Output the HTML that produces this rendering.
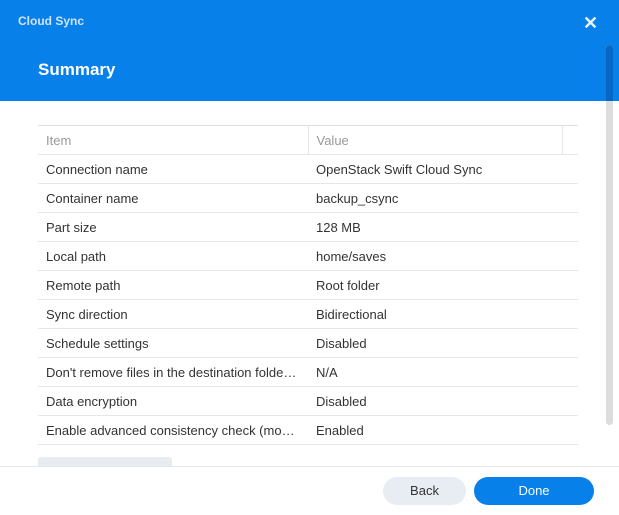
<!DOCTYPE html>
<html><head><style>
body{margin:0;width:619px;height:514px;overflow:hidden;background:#fff;font-family:"Liberation Sans",sans-serif;position:relative}
.hdr{position:absolute;left:0;top:0;width:619px;height:101px;background:#0780ea}
.t1{position:absolute;left:18px;top:14px;font-size:12px;font-weight:bold;color:#cfe4fa}
.t2{position:absolute;left:38px;top:60px;font-size:17px;font-weight:bold;color:#fff}
.x{position:absolute;left:583px;top:13px;font-size:18px;font-weight:bold;color:#e6f1fc}
.sb{position:absolute;left:606px;top:45px;width:7px;height:380px;border-radius:4px;background:#ddd}
.sb2{position:absolute;left:606px;top:45px;width:7px;height:56px;border-radius:4px 4px 0 0;background:#0668c4}
table{position:absolute;left:38px;top:125px;width:540px;border-collapse:collapse;font-size:13px;color:#333;table-layout:fixed}
td{height:28px;border-top:1px solid #e3e7ec;border-bottom:1px solid #e3e7ec;padding:0 0 0 8px;white-space:nowrap;overflow:hidden;text-overflow:ellipsis}
td.a{padding-right:10px}
th{height:26px;border-top:1px solid #d9dee4;border-bottom:1px solid #e3e7ec;font-weight:normal;text-align:left;color:#999;padding-left:8px}
.gb{position:absolute;left:38px;top:457px;width:134px;height:12px;background:#e8ecf1;border-radius:3px}
.ft{position:absolute;left:0;top:466px;width:619px;height:48px;background:#fff;border-top:1px solid #e3e7ec}
.btn{position:absolute;top:477px;height:28px;border-radius:14px;font-size:13px;text-align:center;line-height:28px}
</style></head><body>
<div class="hdr"><div class="t1">Cloud Sync</div><div class="t2">Summary</div><div class="x">✕</div></div>
<div class="sb"></div><div class="sb2"></div>
<table>
<colgroup><col style="width:270px"><col style="width:254px"><col style="width:16px"></colgroup>
<tr><th style="border-right:1px solid #e3e7ec">Item</th><th style="border-right:1px solid #e3e7ec">Value</th><th></th></tr>
<tr><td class="a">Connection name</td><td colspan="2">OpenStack Swift Cloud Sync</td></tr>
<tr><td class="a">Container name</td><td colspan="2">backup_csync</td></tr>
<tr><td class="a">Part size</td><td colspan="2">128 MB</td></tr>
<tr><td class="a">Local path</td><td colspan="2">home/saves</td></tr>
<tr><td class="a">Remote path</td><td colspan="2">Root folder</td></tr>
<tr><td class="a">Sync direction</td><td colspan="2">Bidirectional</td></tr>
<tr><td class="a">Schedule settings</td><td colspan="2">Disabled</td></tr>
<tr><td class="a">Don't remove files in the destination folder when they are removed</td><td colspan="2">N/A</td></tr>
<tr><td class="a">Data encryption</td><td colspan="2">Disabled</td></tr>
<tr><td class="a">Enable advanced consistency check (more resources)</td><td colspan="2">Enabled</td></tr>
</table>
<div class="gb"></div>
<div class="ft"></div>
<div class="btn" style="left:383px;width:83px;background:#e8edf3;color:#333">Back</div>
<div class="btn" style="left:474px;width:120px;background:#0780ea;color:#fff">Done</div>
</body></html>
